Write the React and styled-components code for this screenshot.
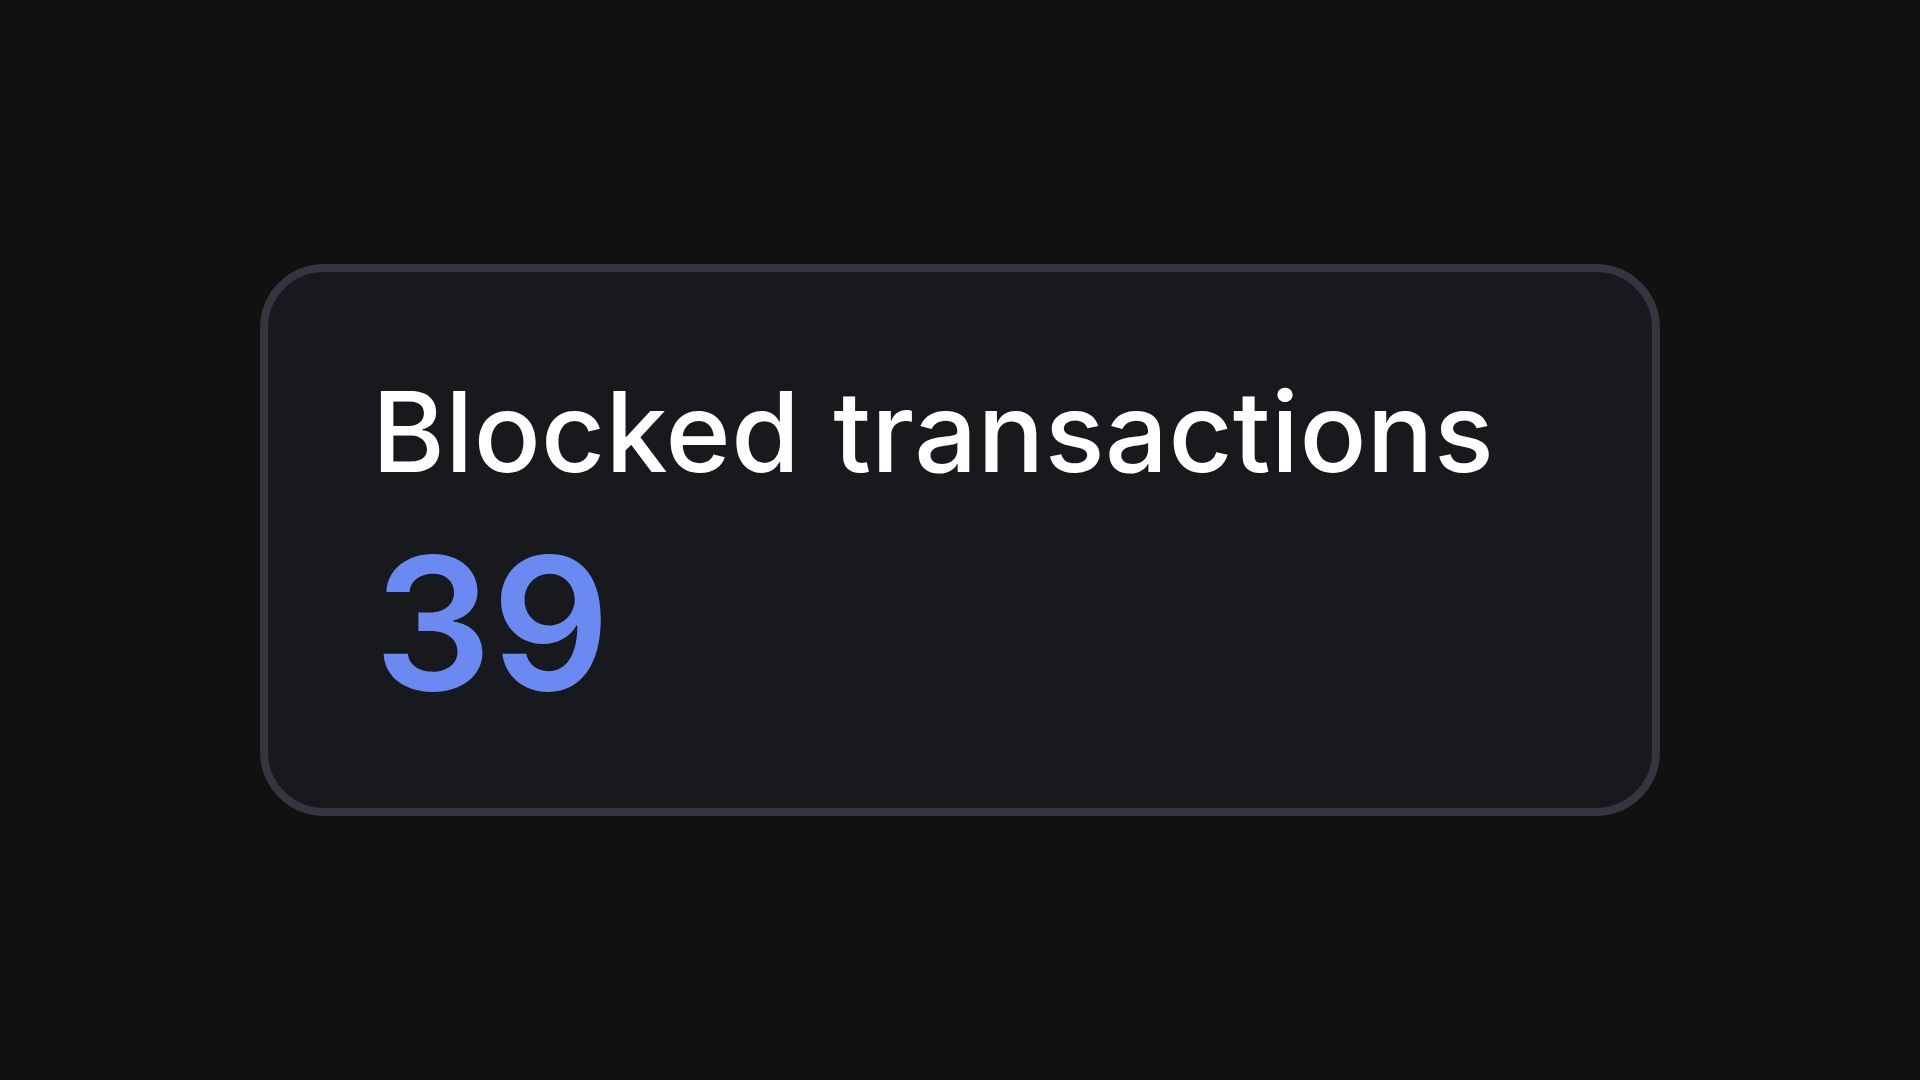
import React from 'react';
import styled, { createGlobalStyle } from 'styled-components';

const Global = createGlobalStyle`
html, body {
  margin: 0;
  padding: 0;
  background: #111111;
}
body {
  font-family: Inter, "Noto Sans", sans-serif;
}
`;

const Page = styled.div`
width: 1920px;
height: 1080px;
display: flex;
align-items: center;
justify-content: center;
`;

const Card = styled.div`
box-sizing: border-box;
width: 1400px;
height: 552px;
border: 8px solid #35353f;
border-radius: 64px;
background: #18191d;
padding: 93px 104px;
display: flex;
flex-direction: column;
`;

const Title = styled.div`
font-size: 111px;
font-weight: 500;
line-height: 1.2;
letter-spacing: 0.4px;
word-spacing: 3px;
color: #ffffff;
`;

const Value = styled.div`
margin-top: 14px;
padding-left: 2px;
font-size: 185px;
font-weight: 600;
line-height: 1.2;
color: #6a8af2;
`;

export default function App() {
  return (
    <>
      <Global />
      <Page>
        <Card>
          <Title>Blocked transactions</Title>
          <Value>39</Value>
        </Card>
      </Page>
    </>
  );
}
